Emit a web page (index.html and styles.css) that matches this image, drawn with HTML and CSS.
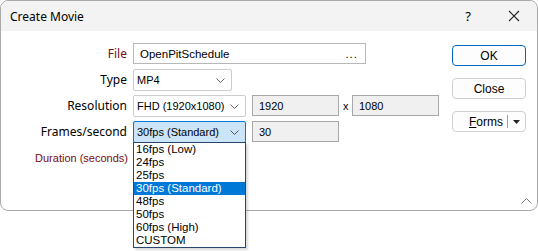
FILE: index.html
```html
<!DOCTYPE html>
<html lang="en">

<head>
    <meta charset="UTF-8">
    <title>Create Movie</title>
    <link rel="stylesheet" href="styles.css">
</head>

<body>

    <div class="window">
        <div class="titlebar">
            <span class="title">Create Movie</span>
            <span class="help">?</span>
            <span class="close-x">
                <svg width="12" height="12" viewBox="0 0 12 12"><path d="M1 1 L11 11 M11 1 L1 11" stroke="#222" stroke-width="1.1" fill="none"/></svg>
            </span>
        </div>

        <div class="content">
            <div class="form">
                <label class="lbl lbl-key">File</label>
                <div class="field file-field">
                    <span>OpenPitSchedule</span>
                    <span class="dots">...</span>
                </div>

                <label class="lbl">Type</label>
                <div class="row">
                    <div class="select type-select">
                        <span>MP4</span>
                        <svg class="chev" width="9" height="5" viewBox="0 0 9 5"><path d="M0.5 0.5 L4.5 4.5 L8.5 0.5" stroke="#666" fill="none"/></svg>
                    </div>
                </div>

                <label class="lbl">Resolution</label>
                <div class="row">
                    <div class="select res-select">
                        <span>FHD (1920x1080)</span>
                        <svg class="chev" width="9" height="5" viewBox="0 0 9 5"><path d="M0.5 0.5 L4.5 4.5 L8.5 0.5" stroke="#666" fill="none"/></svg>
                    </div>
                    <div class="size-pair">
                        <div class="field ro">1920</div>
                        <span class="times">x</span>
                        <div class="field ro">1080</div>
                    </div>
                </div>

                <label class="lbl">Frames/second</label>
                <div class="row">
                    <div class="fps-wrap">
                        <div class="select res-select active">
                            <span>30fps (Standard)</span>
                            <svg class="chev" width="9" height="5" viewBox="0 0 9 5"><path d="M0.5 0.5 L4.5 4.5 L8.5 0.5" stroke="#555" fill="none"/></svg>
                        </div>
                        <ul class="droplist">
                            <li>16fps (Low)</li>
                            <li>24fps</li>
                            <li>25fps</li>
                            <li class="sel">30fps (Standard)</li>
                            <li>48fps</li>
                            <li>50fps</li>
                            <li>60fps (High)</li>
                            <li>CUSTOM</li>
                        </ul>
                    </div>
                    <div class="field ro">30</div>
                </div>

                <label class="lbl lbl-key lbl-small">Duration (seconds)</label>
                <div class="row"></div>
            </div>

            <div class="buttons">
                <button class="btn btn-default">OK</button>
                <button class="btn">Close</button>
                <button class="btn btn-split">
                    <span class="split-main"><u>F</u>orms</span>
                    <span class="split-arrow">
                        <svg width="7" height="4" viewBox="0 0 7 4"><path d="M0 0 L7 0 L3.5 4 Z" fill="#222"/></svg>
                    </span>
                </button>
            </div>
        </div>

        <svg class="collapse" width="11" height="6" viewBox="0 0 11 6"><path d="M0.5 5.5 L5.5 0.5 L10.5 5.5" stroke="#777" fill="none"/></svg>
    </div>

</body>

</html>
```

FILE: styles.css
```css
html,
body {
    min-height: 251px;
}

body {
    margin: 0;
    background-color: #ffffff;
    font-family: "Liberation Sans", Arial, sans-serif;
    font-size: 11px;
    color: #000;
}

.window {
    position: relative;
    width: 536px;
    height: 209px;
    border: 1px solid #a9a9a9;
    border-radius: 8px;
    background-color: #ffffff;
}

.titlebar {
    display: flex;
    align-items: center;
    height: 30px;
    padding: 0 0 0 9px;
    background-color: #f3f3f3;
    border-radius: 8px 8px 0 0;
    font-family: "Noto Sans", sans-serif;
    font-size: 12px;
}

.title {
    flex: 1;
}

.help {
    width: 46px;
    text-align: center;
    font-size: 13px;
}

.close-x {
    display: flex;
    justify-content: center;
    width: 46px;
}

.content {
    display: flex;
    padding-top: 12px;
}

.form {
    display: grid;
    grid-template-columns: 126px auto;
    grid-auto-rows: 21px;
    column-gap: 6px;
    row-gap: 5px;
    flex: 1;
}

.lbl {
    display: flex;
    align-items: center;
    justify-content: flex-end;
    font-family: "Noto Sans", sans-serif;
    font-size: 12px;
}

.lbl-key {
    color: #7d0a0a;
}

.lbl-small {
    font-family: "Liberation Sans", Arial, sans-serif;
    font-size: 11px;
    padding-top: 1px;
    margin-right: -1px;
}

.row {
    display: flex;
    align-items: center;
    gap: 6px;
}

.size-pair {
    display: flex;
    align-items: center;
}

.field {
    box-sizing: border-box;
    display: flex;
    align-items: center;
    height: 21px;
    padding: 0 5px;
    border: 1px solid #b8b8b8;
    background-color: #fff;
}

.file-field {
    width: 233px;
    padding-left: 6px;
    font-size: 11.5px;
}

.file-field span:first-child {
    flex: 1;
}

.dots {
    padding-right: 2px;
    letter-spacing: 1px;
}

.ro {
    width: 87px;
    background-color: #f0f0f0;
    border-color: #a8a8a8;
    padding-left: 6px;
}

.times {
    width: 6px;
    margin: 0 3px 0 4px;
}

.select {
    box-sizing: border-box;
    display: flex;
    align-items: center;
    justify-content: space-between;
    height: 22px;
    padding: 0 6px 0 3px;
    border: 1px solid #cccccc;
    border-radius: 2px;
    background-color: #fff;
}

.type-select {
    width: 99px;
}

.res-select {
    width: 113px;
}

.select.active {
    background-color: #cce4f7;
    border-color: #0078d7;
}

.chev {
    margin-top: 1px;
}

.fps-wrap {
    position: relative;
}

.droplist {
    position: absolute;
    top: 21px;
    left: 0;
    width: 113px;
    margin: 0;
    padding: 0;
    list-style: none;
    box-sizing: border-box;
    border: 1px solid #27476f;
    background-color: #fff;
    box-shadow: 2px 2px 2px rgba(0, 0, 0, 0.15);
    z-index: 5;
    font-size: 11.5px;
}

.droplist li {
    height: 13px;
    line-height: 13px;
    padding-left: 2px;
}

.droplist li.sel {
    background-color: #0078d7;
    color: #fff;
}

.buttons {
    display: flex;
    flex-direction: column;
    gap: 12px;
    width: 74px;
    margin-right: 11px;
    padding-top: 2px;
}

.btn {
    box-sizing: border-box;
    height: 21px;
    padding: 0;
    border: 1px solid #d0d0d0;
    border-radius: 4px;
    background-color: #fdfdfd;
    font-family: "Liberation Sans", Arial, sans-serif;
    font-size: 12px;
    color: #000;
}

.btn-default {
    border-color: #0067c0;
}

.btn-split {
    display: flex;
    align-items: stretch;
}

.split-main {
    flex: 1;
    display: flex;
    align-items: center;
    justify-content: flex-end;
    padding-right: 4px;
}

.split-main u {
    text-decoration-thickness: 1px;
}

.split-arrow {
    display: flex;
    align-items: center;
    justify-content: center;
    width: 17px;
    margin: 3px 0;
    border-left: 1px solid #a0a0a0;
}

.collapse {
    position: absolute;
    right: 5px;
    bottom: 6px;
}
```
